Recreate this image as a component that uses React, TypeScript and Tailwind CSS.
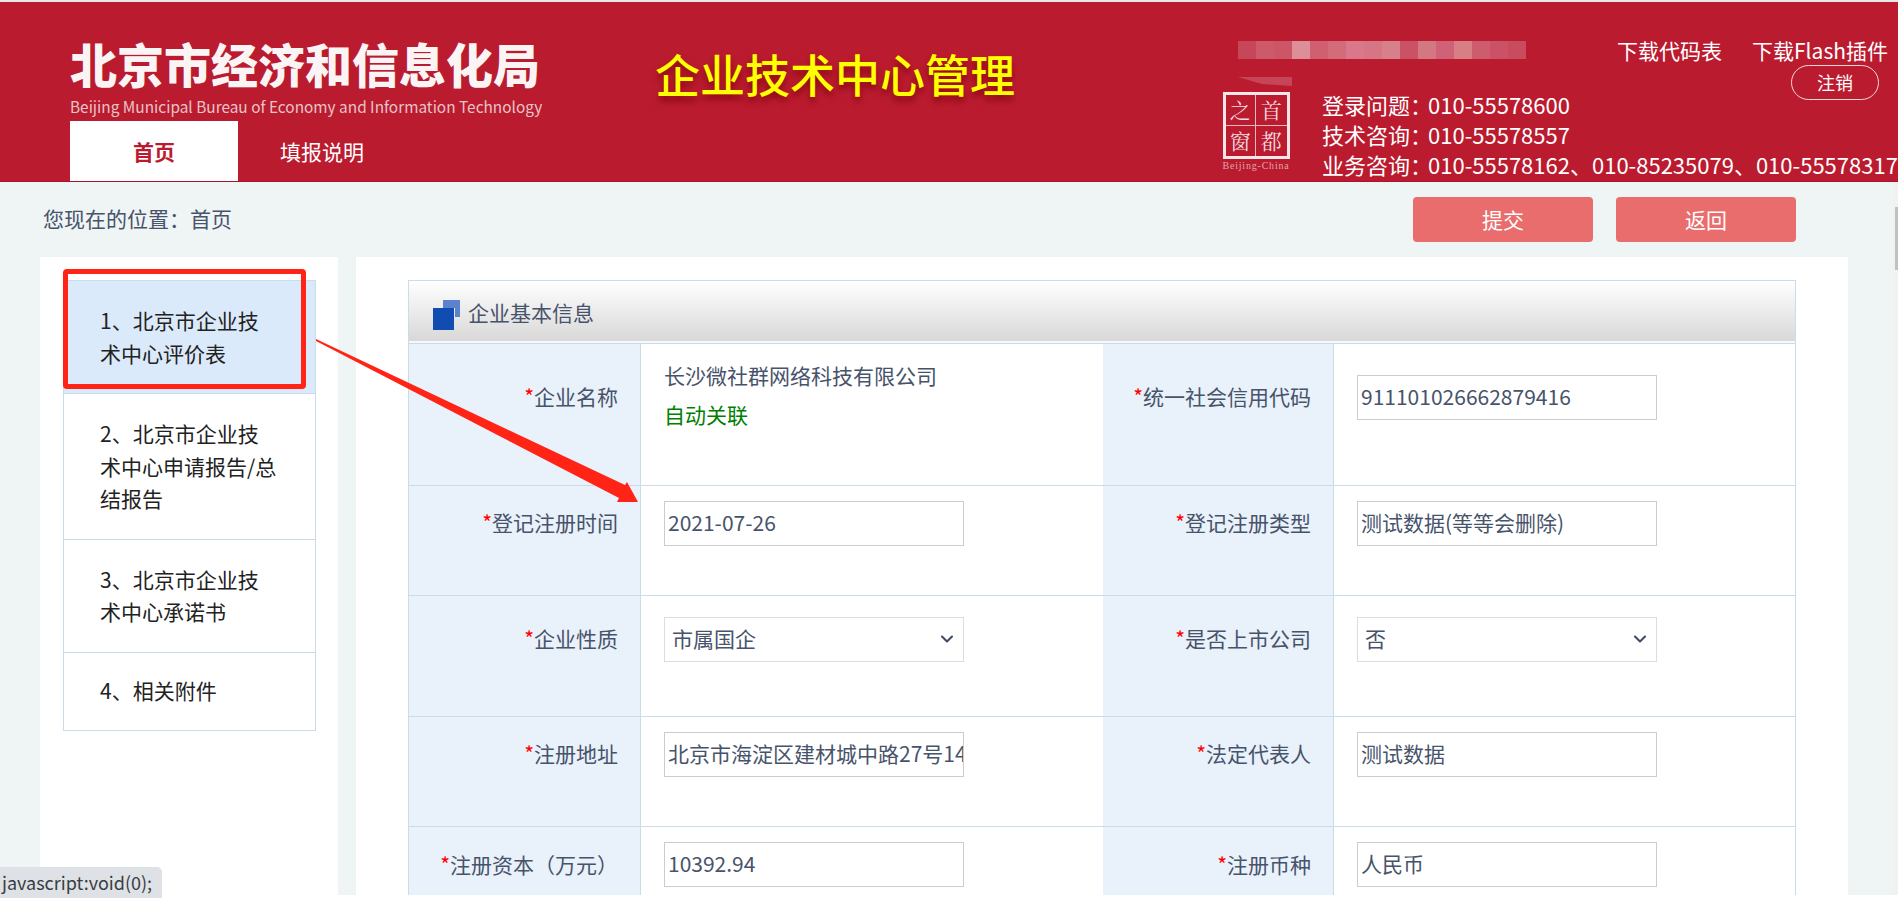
import React from 'react';
import { ChevronDown } from 'lucide-react';

const blurCells = ['#c6475a', '#cd5a6b', '#cc5566', '#dc8f98', '#cf6070', '#d36b79', '#d8788a', '#d67684', '#d77f8a', '#cb5164', '#d37780', '#cf6279', '#d87e85', '#cd5c6c', '#ca5166', '#c94c5e'];

const sideItems = [
  { text: '1、北京市企业技术中心评价表', active: true },
  { text: '2、北京市企业技术中心申请报告/总结报告', active: false },
  { text: '3、北京市企业技术中心承诺书', active: false },
  { text: '4、相关附件', active: false },
];

const contacts = [
  { label: '登录问题：', value: '010-55578600' },
  { label: '技术咨询：', value: '010-55578557' },
  { label: '业务咨询：', value: '010-55578162、010-85235079、010-55578317' },
];

type Field = { label: string; value?: string; select?: boolean; company?: boolean };
type Row = { rowCls: string; labelCls: string; inputCls: string; left: Field; right: Field };

const rows: Row[] = [
  {
    rowCls: 'h-[142px]',
    labelCls: 'pt-[37px]',
    inputCls: 'pt-[31px]',
    left: { label: '企业名称', company: true },
    right: { label: '统一社会信用代码', value: '911101026662879416' },
  },
  {
    rowCls: 'h-[110px]',
    labelCls: 'pt-[21px]',
    inputCls: 'pt-[15px]',
    left: { label: '登记注册时间', value: '2021-07-26' },
    right: { label: '登记注册类型', value: '测试数据(等等会删除)' },
  },
  {
    rowCls: 'h-[121px]',
    labelCls: 'pt-[27px]',
    inputCls: 'pt-[21px]',
    left: { label: '企业性质', value: '市属国企', select: true },
    right: { label: '是否上市公司', value: '否', select: true },
  },
  {
    rowCls: 'h-[110px]',
    labelCls: 'pt-[21px]',
    inputCls: 'pt-[15px]',
    left: { label: '注册地址', value: '北京市海淀区建材城中路27号14' },
    right: { label: '法定代表人', value: '测试数据' },
  },
  {
    rowCls: 'h-[110px]',
    labelCls: 'pt-[22px]',
    inputCls: 'pt-[15px]',
    left: { label: '注册资本（万元）', value: '10392.94' },
    right: { label: '注册币种', value: '人民币' },
  },
];

function LabelCell({ label, cls }: { label: string; cls: string }) {
  return (
    <div className={`bg-[#e9f1fa] border-r border-[#c9dde9] pr-[22px] text-right leading-[30px] ${cls}`}>
      <span className="text-[#ff0000]">*</span>
      {label}
    </div>
  );
}

function ValueCell({ field, cls }: { field: Field; cls: string }) {
  if (field.company) {
    return (
      <div className="pl-[23px] pt-[16px] leading-[30px]">
        <div>长沙微社群网络科技有限公司</div>
        <div className="mt-[9px] text-[#008000]">自动关联</div>
      </div>
    );
  }
  return (
    <div className={`pl-[23px] ${cls}`}>
      <div className={`w-[300px] h-[45px] pb-[2px] bg-white border flex items-center overflow-hidden whitespace-nowrap ${field.select ? 'border-[#dddddd] pl-[7px] pr-[6px] justify-between' : 'border-[#cccccc] pl-[3px]'}`}>
        <span>{field.value}</span>
        {field.select && <ChevronDown size={20} strokeWidth={2.5} className="shrink-0 text-[#3f4a63]" />}
      </div>
    </div>
  );
}

export default function App() {
  return (
    <div className="relative h-[898px] overflow-hidden bg-white text-[21px] text-[#47536b] font-['Noto_Sans_CJK_SC','Noto_Sans',sans-serif]">
      {/* top strip */}
      <div className="h-[2px] bg-[#e8e8e8]" />

      {/* Header */}
      <header className="relative h-[180px] bg-[#bb1b2f] border-b border-[#a81528] flex overflow-hidden text-white">
        <div className="w-[585px] shrink-0 pl-[70px] flex flex-col">
          <div className="pt-[31px] h-[92px] text-[47px] leading-[60px] font-black whitespace-nowrap text-[#faf4f5]">北京市经济和信息化局</div>
          <div className="h-[28px] text-[15.4px] leading-[24px] text-[#e8c4c8] whitespace-nowrap">Beijing Municipal Bureau of Economy and Information Technology</div>
          <nav className="flex h-[60px] mt-auto">
            <div className="w-[168px] pt-[2px] bg-white text-[#bb1b2f] font-bold flex items-center justify-center">首页</div>
            <div className="w-[168px] pt-[2px] flex items-center justify-center">填报说明</div>
          </nav>
        </div>
        <div className="w-[653px] shrink-0 pl-[70px] pt-[39px]">
          <div className="text-[45px] leading-[66px] text-[#ffff00] whitespace-nowrap font-medium [text-shadow:0_5px_6px_rgba(120,0,10,0.75)]">企业技术中心管理</div>
        </div>
        <div className="grow min-w-0 flex flex-col">
          <div className="flex justify-between pt-[33px] h-[63px]">
            <div className="flex h-[18px] mt-[6px]">
              {blurCells.map((c, i) => (
                <div key={i} className="w-[18px] h-full" style={{ background: c }} />
              ))}
            </div>
            <div className="flex gap-[30px] pr-[10px] leading-[30px] whitespace-nowrap">
              <span>下载代码表</span>
              <span>下载Flash插件</span>
            </div>
          </div>
          <div className="flex">
            <div className="w-[68px] h-[81px] shrink-0 mt-[27px] -ml-[16px] mr-[32px] flex flex-col items-center">
              <div className="w-[67px] h-[67px] shrink-0 border-[3px] border-[#f6e6e8] grid grid-cols-2 grid-rows-2 text-[21px] leading-none font-['Noto_Serif_CJK_SC','Noto_Sans_CJK_SC',serif] text-[#f3dfe2]">
                <div className="flex items-center justify-center border-r border-b border-[#e9b9bf]">之</div>
                <div className="flex items-center justify-center border-b border-[#e9b9bf]">首</div>
                <div className="flex items-center justify-center border-r border-[#e9b9bf]">窗</div>
                <div className="flex items-center justify-center">都</div>
              </div>
              <div className="text-[10px] leading-[12px] tracking-[0.8px] mt-[1px] text-[#dfa6ae] font-['Liberation_Serif',serif] whitespace-nowrap">Beijing-China</div>
            </div>
            <div className="min-w-0 grow">
              <div className="h-[35px] flex justify-end pr-[19px]">
                <div className="w-[88px] h-[35px] rounded-full border border-[#f4d6da] text-[18px] flex items-center justify-center">注销</div>
              </div>
              <div className="-mt-[11px] text-[22px] leading-[30px] whitespace-nowrap">
                {contacts.map((c) => (
                  <div key={c.label}>
                    {c.label}
                    <span className="-ml-[4px]">{c.value}</span>
                  </div>
                ))}
              </div>
            </div>
          </div>
        </div>
        {/* stray lighter wedge under the masked area */}
        <svg className="absolute left-[1238px] top-[75px]" width="54" height="9" viewBox="0 0 54 9">
          <polygon points="0,0 54,0 54,9 24,7" fill="#c64558" />
        </svg>
      </header>

      {/* Page body */}
      <div className="relative h-[713px] overflow-hidden bg-[#eff4f4]">
        {/* breadcrumb + actions */}
        <div className="h-[75px] flex items-start justify-between pl-[43px] pr-[102px]">
          <div className="pt-[21px] leading-[30px]">您现在的位置：首页</div>
          <div className="flex gap-[23px] pt-[15px]">
            <button className="w-[180px] h-[45px] rounded-[4px] bg-[#e96d6d] text-white">提交</button>
            <button className="w-[180px] h-[45px] rounded-[4px] bg-[#e96d6d] text-white">返回</button>
          </div>
        </div>

        <div className="flex pl-[40px]">
          {/* Sidebar */}
          <aside className="w-[298px] h-[640px] bg-white pl-[23px] pt-[23px] shrink-0">
            <ul className="w-[253px] border border-[#c9dde9] text-[#222222] leading-[32.5px]">
              {sideItems.map((item, i) => (
                <li key={i} className={`pl-[36px] pr-[38px] pt-[23px] pb-[24px] last:pt-[21px] last:pb-[24px] border-[#c9dde9] ${i > 0 ? 'border-t' : ''} ${item.active ? 'bg-[#dbeafb]' : ''}`}>
                  {item.text}
                </li>
              ))}
            </ul>
          </aside>

          {/* Main form */}
          <main className="w-[1492px] h-[640px] ml-[18px] bg-white pl-[52px] pt-[23px] shrink-0">
            <div className="w-[1388px] border-x border-t border-[#c9dde9]">
              <div className="h-[60px] flex items-center bg-gradient-to-b from-white to-[#d8d8d8]">
                <svg width="28" height="31" viewBox="0 0 28 31" className="ml-[24px] mb-[-9px] shrink-0">
                  <rect x="10" y="0" width="17" height="17" fill="#5c82cd" />
                  <rect x="0" y="8" width="22" height="22" fill="#dfe6f2" />
                  <rect x="0" y="8" width="21" height="22" fill="#114cb0" />
                </svg>
                <span className="ml-[7px] pt-[1px] leading-[30px]">企业基本信息</span>
              </div>
              <div className="h-[2px] bg-[#f4f8fb] border-b border-[#c9dde9] box-content" />
              {rows.map((row, i) => (
                <div key={i} className={`grid grid-cols-[232px_462px_231px_1fr] border-b border-[#c9dde9] box-border ${row.rowCls}`}>
                  <LabelCell label={row.left.label} cls={row.labelCls} />
                  <ValueCell field={row.left} cls={row.inputCls} />
                  <LabelCell label={row.right.label} cls={row.labelCls} />
                  <ValueCell field={row.right} cls={row.inputCls} />
                </div>
              ))}
            </div>
          </main>
        </div>

        {/* red annotation */}
        <div className="absolute left-[63px] top-[87px] w-[243px] h-[120px] border-[5px] border-[#ff2416] rounded-[4px]" />
        <svg className="absolute left-[310px] top-[150px]" width="340" height="180" viewBox="0 0 340 180">
          <polygon points="6,7 315,153 317,150 328,170 307,170 309,166 6,9" fill="#ff2416" />
        </svg>
      </div>

      {/* scrollbar */}
      <div className="absolute right-0 top-[182px] w-[5px] h-[713px] bg-[#f1f1f1]">
        <div className="absolute right-0 top-[25px] w-[3px] h-[63px] bg-[#c1c1c1]" />
      </div>

      {/* status tooltip */}
      <div className="absolute left-0 bottom-0 w-[162px] h-[31px] bg-[#dee1e6] rounded-tr-[5px] pl-[2px] text-[18px] leading-[31px] text-[#3a3d42] whitespace-nowrap">javascript:void(0);</div>
    </div>
  );
}
